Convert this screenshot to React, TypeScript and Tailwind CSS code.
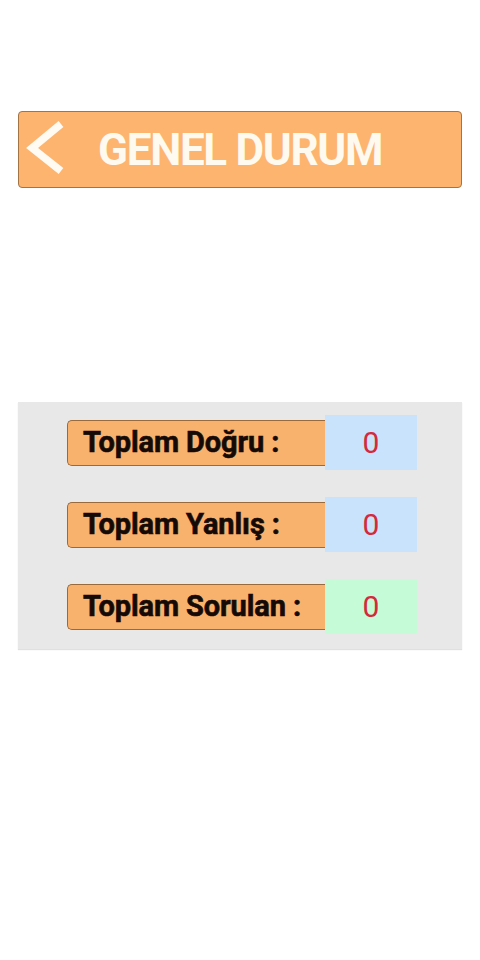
import React from "react";

function Row({ label, bg }: { label: string; bg: string }) {
  return (
    <div className="flex items-center">
      <div className="w-[258px] h-[46px] bg-[#f9b16e] border border-[#9a6a3c] rounded-l-[5px] flex items-center pl-[15px] border-r-0">
        <span className="text-[29px] font-bold text-[#150a05] leading-none tracking-[-0.1px] [-webkit-text-stroke:0.6px_#150a05]" style={{ fontFamily: "Roboto, 'Liberation Sans', sans-serif" }}>
          {label}
        </span>
      </div>
      <div className={`w-[92px] h-[55px] ${bg} flex items-center justify-center`}>
        <span className="text-[30px] text-[#d42a3c] leading-none" style={{ fontFamily: "Roboto, 'Liberation Sans', sans-serif" }}>
          0
        </span>
      </div>
    </div>
  );
}

export default function App() {
  return (
    <div className="w-[480px] h-[960px] bg-white pt-[111px]" style={{ fontFamily: "Roboto, 'Liberation Sans', sans-serif" }}>
      <div className="mx-[18px] h-[77px] bg-[#fdb46f] border border-[#a57445] rounded-[4px] flex items-center">
        <svg width="60" height="60" viewBox="0 0 60 60" className="ml-[2px] shrink-0">
          <polyline points="40,4 11,28 40,51" fill="none" stroke="#fffaf2" strokeWidth="7.5" strokeLinecap="butt" strokeLinejoin="miter" />
        </svg>
        <span className="ml-[17px] text-[44px] font-bold text-[#fffaf0] leading-none tracking-[-1.3px]">GENEL DURUM</span>
      </div>
      <div className="mx-[18px] mt-[214px] h-[247px] bg-[#e8e8e8] shadow-[0_1px_1px_rgba(0,0,0,0.12)] pt-[13px] pl-[49px] flex flex-col gap-[27px]">
        <Row label="Toplam Doğru :" bg="bg-[#c8e3fb]" />
        <Row label="Toplam Yanlış :" bg="bg-[#c8e3fb]" />
        <Row label="Toplam Sorulan :" bg="bg-[#c6fbd7]" />
      </div>
    </div>
  );
}
